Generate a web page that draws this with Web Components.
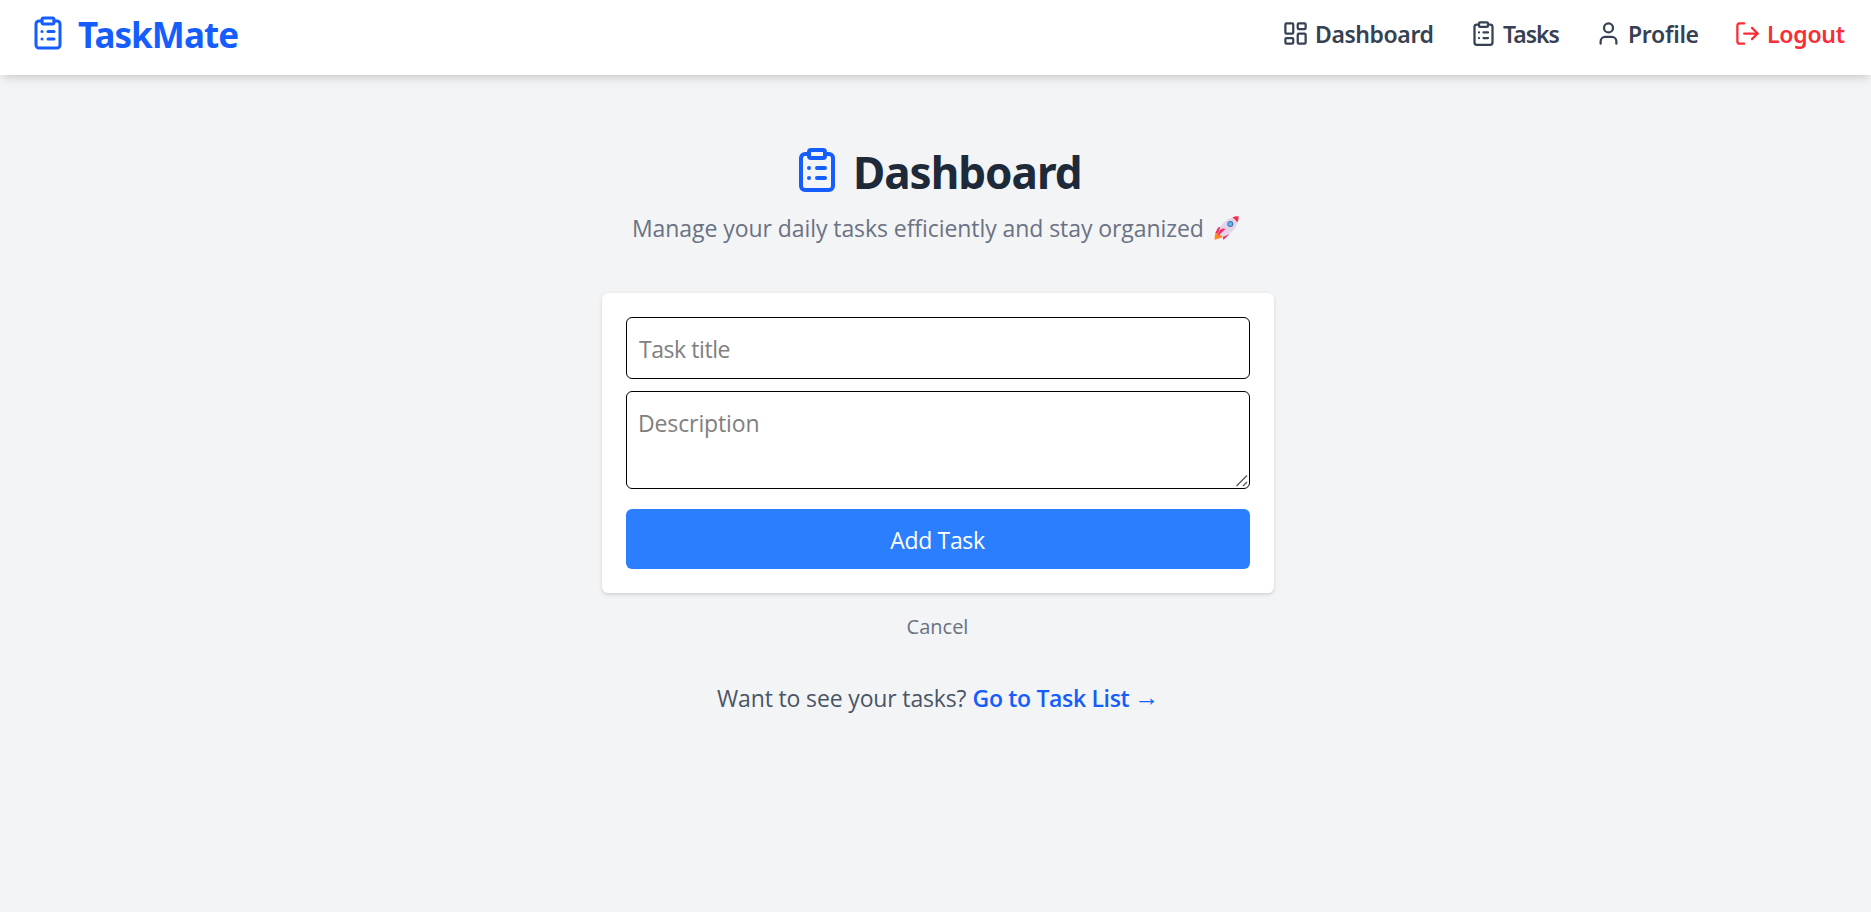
<!DOCTYPE html>
<html lang="en">
<head>
<meta charset="utf-8">
<title>TaskMate</title>
<style>
html,body{margin:0;height:100%;background:#f3f4f6}
body{font-family:"Open Sans","Noto Sans",sans-serif;font-size:23px;line-height:36px;overflow:hidden}
</style>
</head>
<body>
<task-app></task-app>
<script>
const ICONS = {
  clipboard: '<rect width="8" height="4" x="8" y="2" rx="1" ry="1"/><path d="M16 4h2a2 2 0 0 1 2 2v14a2 2 0 0 1-2 2H6a2 2 0 0 1-2-2V6a2 2 0 0 1 2-2h2"/><path d="M12 11h4"/><path d="M12 16h4"/><path d="M8 11h.01"/><path d="M8 16h.01"/>',
  dashboard: '<rect width="7" height="9" x="3" y="3" rx="1"/><rect width="7" height="5" x="14" y="3" rx="1"/><rect width="7" height="9" x="14" y="12" rx="1"/><rect width="7" height="5" x="3" y="16" rx="1"/>',
  user: '<path d="M19 21v-2a4 4 0 0 0-4-4H9a4 4 0 0 0-4 4v2"/><circle cx="12" cy="7" r="4"/>',
  logout: '<path d="M9 21H5a2 2 0 0 1-2-2V5a2 2 0 0 1 2-2h4"/><path d="m16 17 5-5-5-5"/><path d="M21 12H9"/>'
};
const define = (name, html) => customElements.define(name, class extends HTMLElement {
  constructor() {
    super();
    this.attachShadow({mode: 'open'}).innerHTML = html;
  }
});
customElements.define('ui-icon', class extends HTMLElement {
  constructor() { super(); this.attachShadow({mode: 'open'}); }
  connectedCallback() {
    this.shadowRoot.innerHTML = `<style>:host{display:block;flex:none}svg{display:block;width:100%;height:100%}</style>
    <svg viewBox="0 0 24 24" fill="none" stroke="currentColor" stroke-width="2" stroke-linecap="round" stroke-linejoin="round">${ICONS[this.getAttribute('name')]}</svg>`;
  }
});
customElements.define('nav-link', class extends HTMLElement {
  constructor() { super(); this.attachShadow({mode: 'open'}); }
  connectedCallback() {
    this.shadowRoot.innerHTML = `<style>
      :host{display:flex;gap:6px;font-family:"Noto Sans","Open Sans",sans-serif;font-weight:600;color:#364153;height:36px}
      ui-icon{width:27px;height:27px;margin-top:3px}
      span{white-space:nowrap;margin-top:-1px;width:var(--label-width)}
    </style><ui-icon name="${this.getAttribute('icon')}"></ui-icon><span><slot></slot></span>`;
  }
});
define('app-header', `<style>
  :host{display:flex;justify-content:space-between;height:75px;box-sizing:border-box;padding:15px 25px 0 30px;background:#fff;
    box-shadow:0 6px 9px -1.5px rgba(0,0,0,.1),0 3px 6px -3px rgba(0,0,0,.1)}
  .brand{display:flex;gap:12px;color:#155dfc;font-family:"Noto Sans","Open Sans",sans-serif;font-weight:700;font-size:35px;line-height:40px;letter-spacing:-.95px}
  .brand ui-icon{width:36px;height:36px}
  nav{display:flex;gap:36px;padding-top:2px}
  .dashboard{--label-width:119px;letter-spacing:-.42px}
  .tasks{--label-width:56px;letter-spacing:-1px}
  .profile{--label-width:70px;letter-spacing:-.3px}
  .logout{--label-width:79px;letter-spacing:-.25px;color:#fb2c36}
</style>
<div class="brand"><ui-icon name="clipboard"></ui-icon><span>TaskMate</span></div>
<nav><nav-link class="dashboard" icon="dashboard">Dashboard</nav-link><nav-link class="tasks" icon="clipboard">Tasks</nav-link><nav-link class="profile" icon="user">Profile</nav-link><nav-link class="logout" icon="logout">Logout</nav-link></nav>`);
define('rocket-icon', `<style>:host{display:block;width:25px;height:24px;margin-top:6px}svg{display:block}</style>
<svg width="25" height="24" viewBox="0 0 25 24"><path d="M1 18.500 4 16 9 20 7 22 0.500 23.800Z" fill="#ff8a1f"/><path d="M8 10.500 4 11.500 1 17.500 7 17Z" fill="#f8316b"/><path d="M15 15 14.500 19 9.500 24 8 19Z" fill="#f8316b"/><path d="M4.500 17C6 8 13 1.500 23.500.500c1 9-4 17-15 20.500Z" fill="#e3d5e9"/><path d="M18.500 1.500Q21-.200 24.600.300 24.800 4 23.300 6.500 21.500 3.500 18.500 1.500Z" fill="#f0304f"/><path d="M11.500 13 4 20 5.500 14.500Q8.500 11.500 11.500 13Z" fill="#f0306b"/><circle cx="16.300" cy="8" r="3" fill="#4b6f9c"/><circle cx="16.300" cy="8" r="2.100" fill="#5eb3ff"/></svg>`);
define('page-title', `<style>
  :host{display:flex;flex-direction:column;align-items:center;color:#6a7282}
  h1{margin:0;display:flex;gap:12px;width:290px;font-family:"Noto Sans","Open Sans",sans-serif;font-size:44px;line-height:52px;letter-spacing:-1px;color:#1e2939;height:60px}
  ui-icon{width:48px;height:48px;color:#155dfc}
  p{margin:4px 0 0;display:flex;gap:10px;width:612px;white-space:nowrap;letter-spacing:-.07px}
</style><h1><ui-icon name="clipboard"></ui-icon><span>Dashboard</span></h1>
<p><span>Manage your daily tasks efficiently and stay organized</span><rocket-icon></rocket-icon></p>`);
define('task-form', `<style>
  :host{display:flex;flex-direction:column;box-sizing:border-box;width:672px;height:300px;padding:24px;background:#fff;border-radius:6px;
   box-shadow:0 1.5px 4.5px rgba(0,0,0,.1),0 1.5px 3px -1.5px rgba(0,0,0,.1)}
  input,textarea,button{box-sizing:border-box;width:100%;margin:0;font:inherit;border-radius:6px;outline:0;display:block}
  input,textarea{border:1px solid #000;padding:13px 12px 11px;background:#fff}
  input{height:62px;margin-bottom:12px;letter-spacing:-.44px}
  textarea{height:98px;resize:none;padding-left:11px;letter-spacing:-.12px}
  .area{position:relative;margin-bottom:20px}
  .area svg{position:absolute;right:2px;bottom:2px}
  ::placeholder{color:#808080;opacity:1}
  button{height:60px;border:0;padding:2px 1px 0 0;background:#2b7fff;color:#fff;letter-spacing:-.36px}
</style><input placeholder="Task title"><div class="area"><textarea placeholder="Description"></textarea>
<svg width="12" height="12" viewBox="0 0 12 12" fill="none" stroke="#555" stroke-width="1.300"><path d="M.5 11 11 .5M7 11l4-4"/></svg></div><button>Add Task</button>`);
define('task-app', `<style>
  :host{display:block}
  main{display:flex;flex-direction:column;align-items:center;padding:71px 0 0 5px}
  task-form{margin-top:47px}
  .cancel{font-size:20px;color:#6a7282;margin-top:16px;padding-right:1px}
  p{margin:35px 0 0;color:#4a5565;display:flex;width:442px;white-space:nowrap}
  .question{width:257px;letter-spacing:-.15px}
  b{display:flex;font-weight:600;color:#155dfc;letter-spacing:-.33px}
  .arrow{font:400 25px/34px "Liberation Sans",sans-serif;margin-left:5px}
</style><app-header></app-header><main><page-title></page-title><task-form></task-form>
<span class="cancel">Cancel</span><p><span class="question">Want to see your tasks?</span><b><span>Go to Task List</span><span class="arrow">→</span></b></p></main>`);
</script>
</body>
</html>
